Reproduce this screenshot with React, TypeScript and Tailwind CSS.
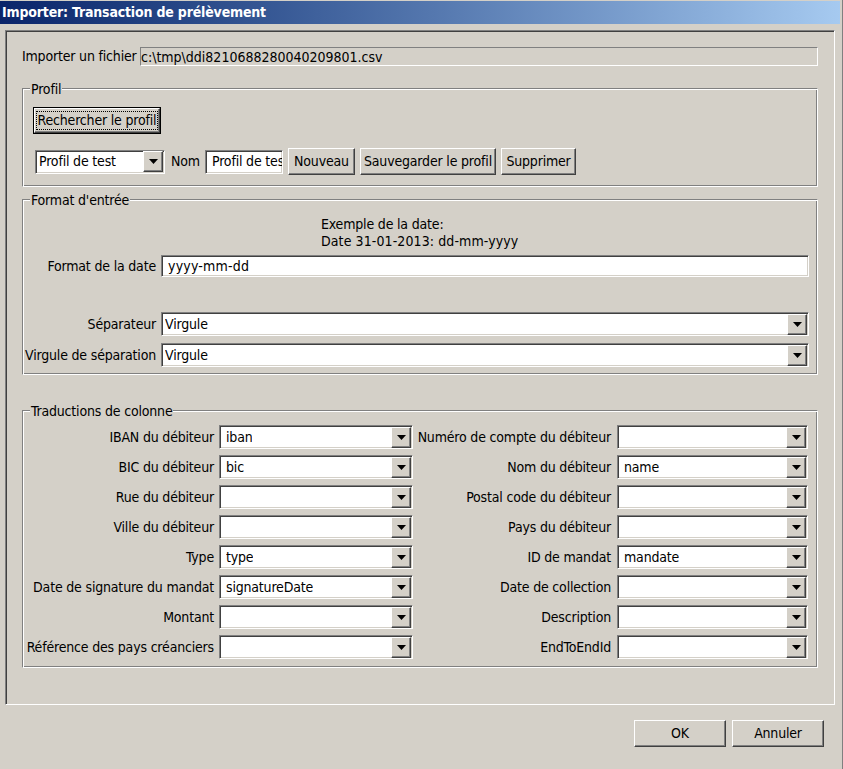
const sunken =
  "border border-t-[#808080] border-l-[#808080] border-r-white border-b-white shadow-[inset_1px_1px_0_#404040,inset_-1px_-1px_0_#d4d0c8]";
const raised =
  "border border-t-white border-l-white border-r-[#404040] border-b-[#404040] shadow-[inset_-1px_-1px_0_#808080] bg-[#d4d0c8]";
const etched =
  "border border-t-[#808080] border-l-[#808080] border-r-white border-b-white shadow-[inset_1px_1px_0_#fff,inset_-1px_-1px_0_#808080]";

const columnRows: [string, string, string, string][] = [
  ["IBAN du débiteur", "iban", "Numéro de compte du débiteur", ""],
  ["BIC du débiteur", "bic", "Nom du débiteur", "name"],
  ["Rue du débiteur", "", "Postal code du débiteur", ""],
  ["Ville du débiteur", "", "Pays du débiteur", ""],
  ["Type", "type", "ID de mandat", "mandate"],
  ["Date de signature du mandat", "signatureDate", "Date de collection", ""],
  ["Montant", "", "Description", ""],
  ["Référence des pays créanciers", "", "EndToEndId", ""],
];

function Combo({ value, className }: { value: string; className: string }) {
  return (
    <div className={`flex h-6 items-center justify-between bg-white pr-px ${sunken} ${className}`}>
      <span className="truncate">{value}</span>
      <span className={`flex h-[21px] w-5 shrink-0 items-center justify-center ${raised}`}>
        <svg width="9" height="5" viewBox="0 0 9 5">
          <polygon points="0,0 9,0 4.5,5" fill="#000" />
        </svg>
      </span>
    </div>
  );
}

function Btn({ label, className }: { label: string; className: string }) {
  return <button className={`flex h-[27px] items-center justify-center whitespace-nowrap ${raised} ${className}`}>{label}</button>;
}

function Group({ title, className, children }: { title: string; className: string; children: React.ReactNode }) {
  return (
    <fieldset className={`w-[796px] ${etched} ${className}`}>
      <legend className="ml-[7px] h-[18px] bg-[#d4d0c8] px-px leading-[20px]">{title}</legend>
      {children}
    </fieldset>
  );
}

export default function App() {
  return (
    <div
      className="flex h-[769px] w-[843px] flex-col overflow-hidden border-r border-[#808080] bg-[#d4d0c8] pt-px text-[14px] leading-[17px] tracking-[-0.18px] text-black"
      style={{ fontFamily: '"DejaVu Sans Condensed", Roboto, sans-serif' }}
    >
      <div className="mr-[2px] flex h-[23px] shrink-0 items-center bg-gradient-to-r from-[#0a246a] to-[#a6caf0] pl-[2px] font-bold text-white">
        Importer: Transaction de prélèvement
      </div>

      <div className={`ml-[5px] mt-[6px] w-[830px] px-4 pb-[36px] pt-4 ${sunken}`}>
        <div className="flex h-[19px] items-center">
          <span className="w-[118px] shrink-0 whitespace-nowrap">Importer un fichier</span>
          <div className="h-[19px] w-[678px] border border-t-[#808080] border-l-[#808080] border-r-white border-b-white leading-[18px] tracking-normal">
            c:\tmp\ddi8210688280040209801.csv
          </div>
        </div>

        <Group title="Profil" className="mt-[13px] pb-[11px]">
          <div className="ml-[10px] mt-[10px] flex h-[27px] w-[128px] items-center justify-center border border-black bg-[#d4d0c8]">
            <div className={`flex h-[25px] w-[126px] items-center justify-center ${raised}`}>
              <span className="whitespace-nowrap border border-dotted border-black px-px leading-[17px]">Rechercher le profil</span>
            </div>
          </div>
          <div className="ml-3 mt-[14px] flex items-center">
            <Combo value="Profil de test" className="w-[130px] pl-[3px]" />
            <span className="ml-[6px] w-[34px] shrink-0">Nom</span>
            <div className={`flex h-6 w-[78px] items-center overflow-hidden whitespace-nowrap bg-white pl-[6px] ${sunken}`}>
              Profil de test
            </div>
            <Btn label="Nouveau" className="ml-[5px] w-[67px]" />
            <Btn label="Sauvegarder le profil" className="ml-[5px] w-[136px]" />
            <Btn label="Supprimer" className="ml-[5px] w-[75px]" />
          </div>
        </Group>

        <Group title="Format d'entrée" className="mt-[3px] pb-[7px]">
          <div className="pl-[298px] pt-2">
            <div>Exemple de la date:</div>
            <div className="tracking-[0.1px]">Date 31-01-2013: dd-mm-yyyy</div>
          </div>
          <div className="mt-[5px] flex items-center">
            <span className="w-[133px] shrink-0 whitespace-nowrap text-right">Format de la date</span>
            <div className={`ml-[5px] flex h-[22px] w-[648px] items-center bg-white pl-[6px] tracking-[0.2px] ${sunken}`}>yyyy-mm-dd</div>
          </div>
          <div className="mt-[35px] flex items-center">
            <span className="w-[133px] shrink-0 whitespace-nowrap text-right">Séparateur</span>
            <Combo value="Virgule" className="ml-[5px] w-[648px] pl-[3px]" />
          </div>
          <div className="mt-[7px] flex items-center">
            <span className="w-[133px] shrink-0 whitespace-nowrap text-right">Virgule de séparation</span>
            <Combo value="Virgule" className="ml-[5px] w-[648px] pl-[3px]" />
          </div>
        </Group>

        <Group title="Traductions de colonne" className="mt-[26px] pb-2">
          <div className="mt-[6px] grid grid-cols-[196px_194px_204px_191px] gap-y-[6px]">
            {columnRows.map(([leftLabel, leftValue, rightLabel, rightValue]) => (
              <div key={leftLabel} className="contents">
                <span className="self-center whitespace-nowrap pr-[5px] text-right">{leftLabel}</span>
                <Combo value={leftValue} className="pl-[6px]" />
                <span className="self-center whitespace-nowrap pr-[6px] text-right">{rightLabel}</span>
                <Combo value={rightValue} className="pl-[6px]" />
              </div>
            ))}
          </div>
        </Group>
      </div>

      <div className="mr-[18px] mt-[15px] flex justify-end gap-[6px]">
        <Btn label="OK" className="w-[92px]" />
        <Btn label="Annuler" className="w-[92px]" />
      </div>
    </div>
  );
}
